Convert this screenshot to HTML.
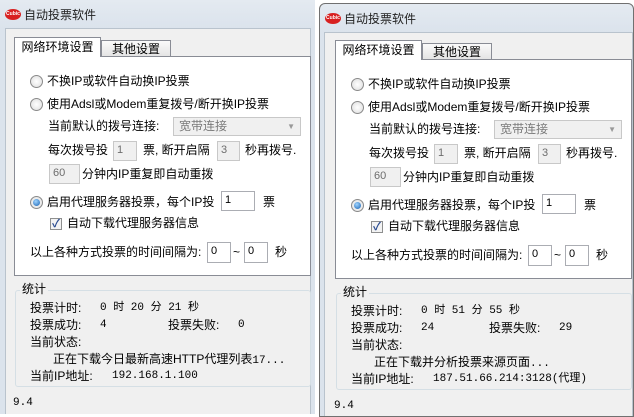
<!DOCTYPE html>
<html><head><meta charset="utf-8"><style>
*{margin:0;padding:0;box-sizing:border-box}
body{width:634px;height:414px;background:#fff;position:relative;overflow:hidden;font-family:"Liberation Sans","Noto Sans CJK SC",sans-serif;font-size:12px;color:#000}
.win{position:absolute;top:0;height:414px;background:linear-gradient(#e4eaf1,#dbe3ec 28px,#dbe3ec)}
.tb{position:absolute;left:0;right:0;top:0;height:28px}
.ico{position:absolute;left:5px;top:9px;width:16px;height:11px;border-radius:50%;background:#d82020;color:#fff;font-size:5px;line-height:11px;text-align:center;font-weight:bold}
.title{position:absolute;left:24px;top:6px;font-size:12px;color:#222}
.client{position:absolute;left:5px;right:4px;top:28px;bottom:0;background:#f0f0f0;border:1px solid #b9c3cd;border-bottom:none}
.a{position:absolute;white-space:nowrap;line-height:14px}
.m{font-family:"Liberation Mono","Noto Sans CJK SC",monospace;font-size:11px}
.tab{position:absolute;border:1px solid #898c95;border-bottom:none;text-align:center;line-height:17px;font-size:12px}
.panel{position:absolute;left:14px;top:56px;width:297px;height:220px;background:#fff;border:1px solid #898c95}
.rad{position:absolute;width:13px;height:13px;border-radius:50%;border:1px solid #8a8a8a;background:radial-gradient(#fff,#dcdcdc)}
.rad.on::after{content:"";position:absolute;left:2px;top:2px;width:7px;height:7px;border-radius:50%;background:radial-gradient(circle at 40% 35%,#9fd4ff,#1660b0)}
.inp{position:absolute;border:1px solid #abadb3;background:#fff;font-size:11px;line-height:16px;padding-left:3px;font-family:"Liberation Sans",sans-serif}
.inp.d{background:#f0f0f0;color:#6d6d6d;border-color:#c8c8c8}
.combo{position:absolute;border:1px solid #c8c8c8;background:#f0f0f0;color:#7a7a7a;padding-left:5px;line-height:17px}
.chk{position:absolute;width:12px;height:12px;border:1px solid #8e8f8f;background:#f3f3f3;color:#2a4b90;font-size:11px;line-height:10px;text-align:center;font-weight:bold}
.grp{position:absolute;left:15px;top:290px;width:296px;height:97px;border:1px solid #d5dfe5;border-radius:3px}
.gl{position:absolute;left:20px;top:282px;background:#f0f0f0;padding:0 2px}
</style></head><body>

<!-- left window -->
<div class="win" style="left:0;width:315px">
<div class="tb"><div class="ico">Cubic</div><div class="title">自动投票软件</div></div>
<div class="client"></div>
<div style="position:absolute;left:0;top:0">
<div class="tab" style="left:101px;top:40px;width:70px;height:17px;background:linear-gradient(#fafafa,#e3e3e3)">其他设置</div>
<div class="panel"></div>
<div class="tab" style="left:14px;top:37px;width:87px;height:20px;background:#fff;line-height:19px">网络环境设置</div>
<div class="rad" style="left:30px;top:75px"></div><div class="a" style="left:47px;top:74px">不换IP或软件自动换IP投票</div>
<div class="rad" style="left:30px;top:98px"></div><div class="a" style="left:47px;top:97px">使用Adsl或Modem重复拨号/断开换IP投票</div>
<div class="a" style="left:48px;top:119px">当前默认的拨号连接:</div>
<div class="combo" style="left:173px;top:117px;width:128px;height:19px">宽带连接<span style="position:absolute;right:5px;top:0;font-size:8px;color:#999">▼</span></div>
<div class="a" style="left:48px;top:143px">每次拨号投</div><div class="inp d" style="left:113px;top:141px;width:24px;height:20px">1</div>
<div class="a" style="left:143px;top:143px">票, 断开启隔</div><div class="inp d" style="left:217px;top:141px;width:23px;height:20px">3</div>
<div class="a" style="left:245px;top:143px">秒再拨号.</div>
<div class="inp d" style="left:49px;top:164px;width:31px;height:20px">60</div><div class="a" style="left:82px;top:167px">分钟内IP重复即自动重拨</div>
<div class="rad on" style="left:30px;top:196px"></div><div class="a" style="left:47px;top:195px">启用代理服务器投票，每个IP投</div>
<div class="inp" style="left:221px;top:191px;width:34px;height:20px">1</div><div class="a" style="left:263px;top:195px">票</div>
<div class="chk" style="left:50px;top:218px">✓</div><div class="a" style="left:67px;top:216px">自动下载代理服务器信息</div>
<div class="a" style="left:30px;top:245px">以上各种方式投票的时间间隔为:</div>
<div class="inp" style="left:207px;top:242px;width:24px;height:21px">0</div><div class="a" style="left:233px;top:245px">~</div>
<div class="inp" style="left:244px;top:242px;width:24px;height:21px">0</div><div class="a" style="left:275px;top:245px">秒</div>
<div class="grp"></div><div class="gl a">统计</div>
<div class="a" style="left:30px;top:301px">投票计时:</div><div class="a m" style="left:100px;top:301px">0 时 20 分 21 秒</div>
<div class="a" style="left:30px;top:318px">投票成功:</div><div class="a m" style="left:100px;top:318px">4</div>
<div class="a" style="left:168px;top:318px">投票失败:</div><div class="a m" style="left:238px;top:318px">0</div>
<div class="a" style="left:30px;top:335px">当前状态:</div>
<div class="a" style="left:53px;top:352px">正在下载今日最新高速HTTP代理列表<span class="m">17...</span></div>
<div class="a" style="left:30px;top:369px">当前IP地址:</div><div class="a m" style="left:112px;top:369px">192.168.1.100</div>
<div class="a m" style="left:13px;top:396px">9.4</div>
</div>
</div>

<!-- right window -->
<div class="win" style="left:319px;width:315px;top:3px;border:1px solid #707070;border-radius:6px 6px 0 0">
<div class="tb"><div class="ico">Cubic</div><div class="title">自动投票软件</div></div>
<div class="client" style="left:4px;right:0"></div>
<div style="position:absolute;left:1px;top:-1px">
<div class="tab" style="left:101px;top:40px;width:70px;height:17px;background:linear-gradient(#fafafa,#e3e3e3)">其他设置</div>
<div class="panel"></div>
<div class="tab" style="left:14px;top:37px;width:87px;height:20px;background:#fff;line-height:19px">网络环境设置</div>
<div class="rad" style="left:30px;top:75px"></div><div class="a" style="left:47px;top:74px">不换IP或软件自动换IP投票</div>
<div class="rad" style="left:30px;top:98px"></div><div class="a" style="left:47px;top:97px">使用Adsl或Modem重复拨号/断开换IP投票</div>
<div class="a" style="left:48px;top:119px">当前默认的拨号连接:</div>
<div class="combo" style="left:173px;top:117px;width:128px;height:19px">宽带连接<span style="position:absolute;right:5px;top:0;font-size:8px;color:#999">▼</span></div>
<div class="a" style="left:48px;top:143px">每次拨号投</div><div class="inp d" style="left:113px;top:141px;width:24px;height:20px">1</div>
<div class="a" style="left:143px;top:143px">票, 断开启隔</div><div class="inp d" style="left:217px;top:141px;width:23px;height:20px">3</div>
<div class="a" style="left:245px;top:143px">秒再拨号.</div>
<div class="inp d" style="left:49px;top:164px;width:31px;height:20px">60</div><div class="a" style="left:82px;top:167px">分钟内IP重复即自动重拨</div>
<div class="rad on" style="left:30px;top:196px"></div><div class="a" style="left:47px;top:195px">启用代理服务器投票，每个IP投</div>
<div class="inp" style="left:221px;top:191px;width:34px;height:20px">1</div><div class="a" style="left:263px;top:195px">票</div>
<div class="chk" style="left:50px;top:218px">✓</div><div class="a" style="left:67px;top:216px">自动下载代理服务器信息</div>
<div class="a" style="left:30px;top:245px">以上各种方式投票的时间间隔为:</div>
<div class="inp" style="left:207px;top:242px;width:24px;height:21px">0</div><div class="a" style="left:233px;top:245px">~</div>
<div class="inp" style="left:244px;top:242px;width:24px;height:21px">0</div><div class="a" style="left:275px;top:245px">秒</div>
<div class="grp"></div><div class="gl a">统计</div>
<div class="a" style="left:30px;top:301px">投票计时:</div><div class="a m" style="left:100px;top:301px">0 时 51 分 55 秒</div>
<div class="a" style="left:30px;top:318px">投票成功:</div><div class="a m" style="left:100px;top:318px">24</div>
<div class="a" style="left:168px;top:318px">投票失败:</div><div class="a m" style="left:238px;top:318px">29</div>
<div class="a" style="left:30px;top:335px">当前状态:</div>
<div class="a" style="left:53px;top:352px">正在下载并分析投票来源页面<span class="m">...</span></div>
<div class="a" style="left:30px;top:369px">当前IP地址:</div><div class="a m" style="left:112px;top:369px">187.51.66.214:3128(代理)</div>
<div class="a m" style="left:13px;top:396px">9.4</div>
</div>
</div>
</body></html>
